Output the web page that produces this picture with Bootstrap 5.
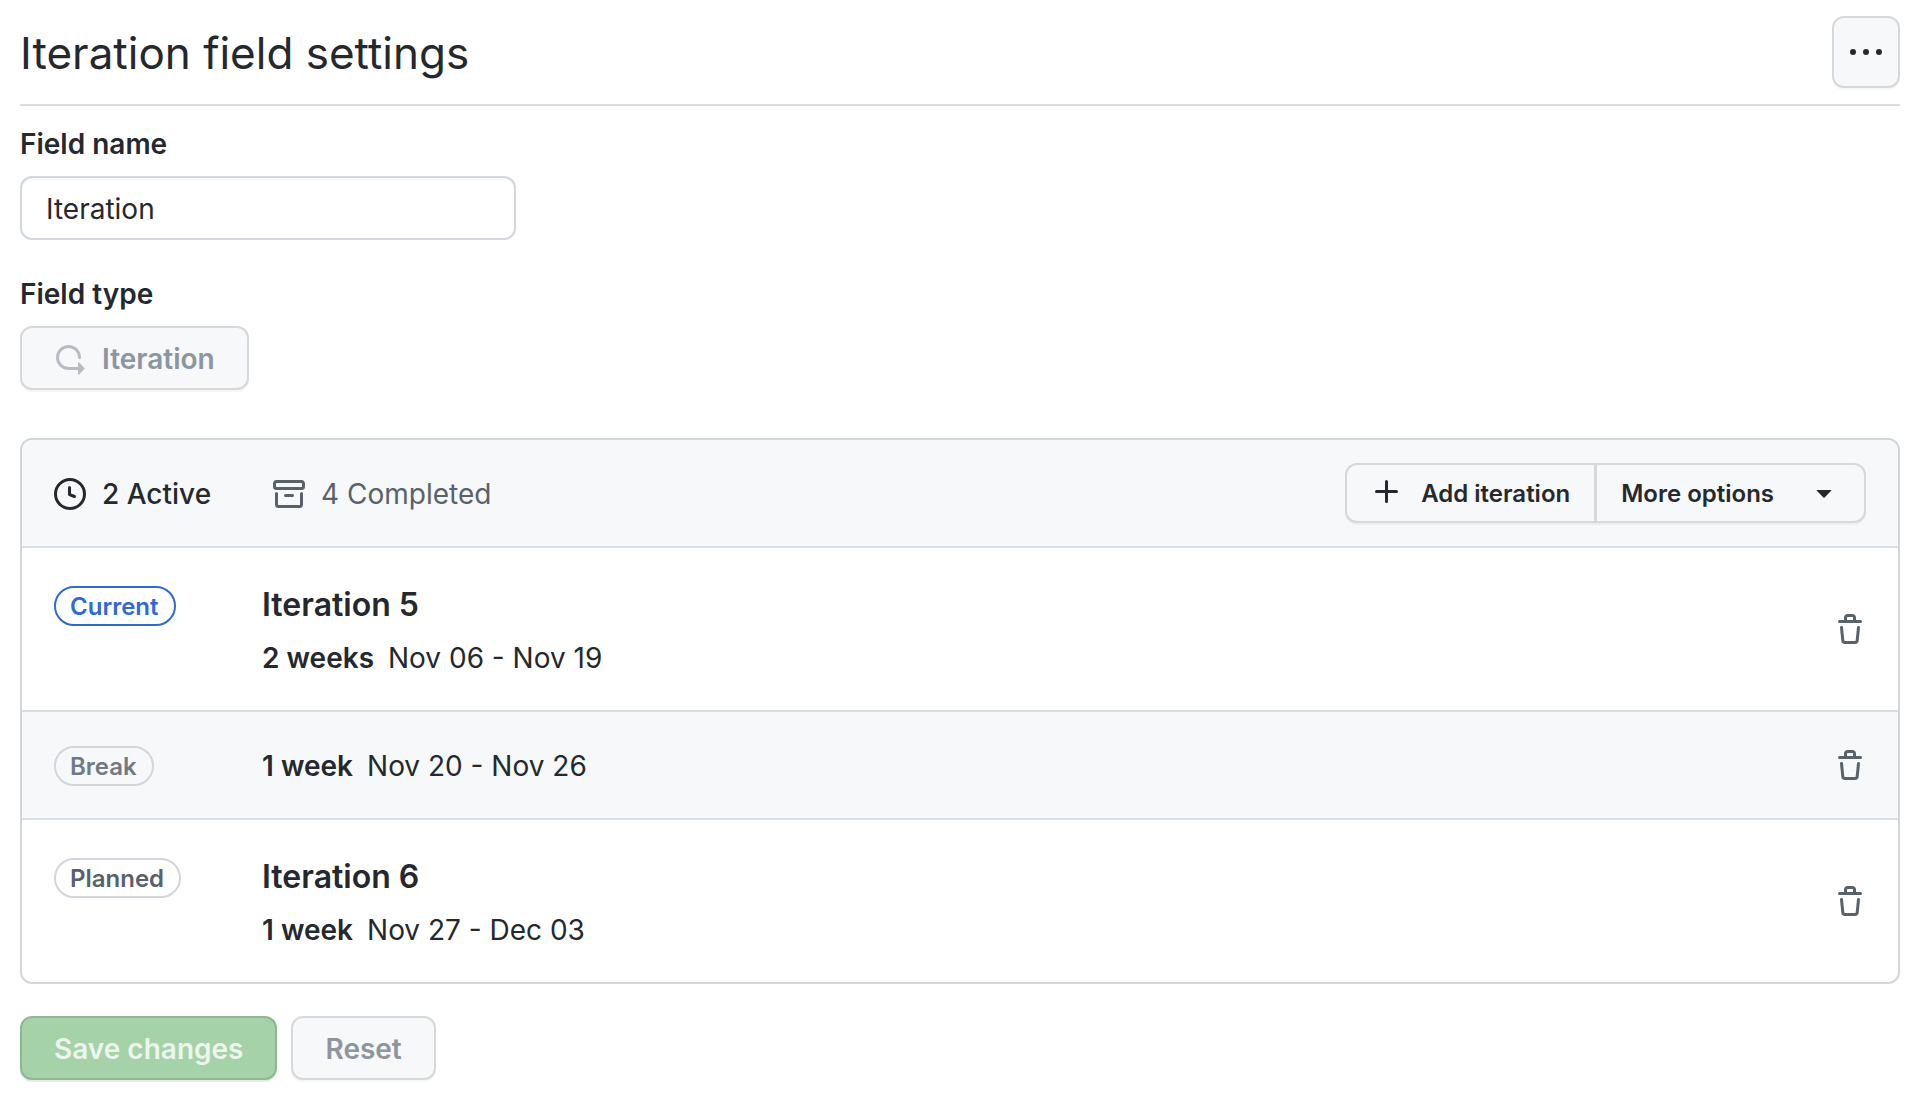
<!DOCTYPE html>
<html lang="en">
<head>
<meta charset="utf-8">
<meta name="viewport" content="width=device-width, initial-scale=1">
<title>Iteration field settings</title>
<link href="https://cdn.jsdelivr.net/npm/bootstrap@5.3.0/dist/css/bootstrap.min.css" rel="stylesheet">
<style>
  :root {
    --ink: #25292e;
    --ink-muted: #59616a;
    --line: #d1d6dc;
    --line-soft: #d8dde1;
    --btn-line: #d6d8da;
    --subtle: #f6f8fa;
  }
  body { font-family: Inter, "Liberation Sans", sans-serif; font-size: 28px; line-height: 40px; color: var(--ink); background: #fff; }
  svg { display: block; flex: none; fill: currentColor; }
  .settings-page { padding: 16px 18px 20px 20px; }
  .page-top { padding-bottom: 16px; border-bottom: 2px solid var(--line-soft); }
  .page-title { font-size: 44px; line-height: 70px; padding-top: 2px; font-weight: 400; }
  .gh-btn {
    --bs-btn-font-size: 28px; --bs-btn-line-height: 40px; --bs-btn-font-weight: 600;
    --bs-btn-border-width: 2px; --bs-btn-border-radius: 12px;
    --bs-btn-padding-x: 32px; --bs-btn-padding-y: 10px;
    --bs-btn-color: var(--ink); --bs-btn-bg: var(--subtle); --bs-btn-border-color: var(--btn-line);
    --bs-btn-hover-color: var(--ink); --bs-btn-hover-bg: #eef1f4; --bs-btn-hover-border-color: var(--btn-line);
    --bs-btn-disabled-color: #8d959f; --bs-btn-disabled-bg: var(--subtle); --bs-btn-disabled-border-color: var(--btn-line);
    --bs-btn-disabled-opacity: 1;
    padding: 11px 32px 9px;
    box-shadow: 0 2px 0 rgba(31, 35, 40, .04);
  }
  .gh-btn-save { --bs-btn-disabled-color: #ecf6ed; --bs-btn-disabled-bg: #a5d2a8; --bs-btn-disabled-border-color: #8fb892; box-shadow: 0 2px 0 rgba(31, 35, 40, .1); }
  .gh-btn-menu { padding: 18px 16px; }
  .gh-btn-sm { --bs-btn-font-size: 24px; --bs-btn-line-height: 36px; padding: 11px 24px 9px; }
  .btn-group > .gh-btn-sm:not(:first-child) { margin-left: -2px; }
  .add-btn { gap: 18px; }
  .more-btn { gap: 34px; }
  .field-label { font-weight: 600; margin: 18px 0 12px; }
  .field-type { margin-top: 34px; }
  .field-input { width: 496px; max-width: 100%; height: 64px; padding: 2px 24px 0; font-size: 28px; color: var(--ink); border: 2px solid var(--line); border-radius: 12px; box-shadow: inset 0 2px 0 rgba(208, 215, 222, .2); }
  .type-icon { color: #b6bcc1; }
  .iteration-panel { margin-top: 48px; border: 2px solid var(--line); border-radius: 12px; overflow: hidden; }
  .panel-top { padding: 23px 32px; background: var(--subtle); }
  .panel-tabs { gap: 62px; padding-top: 2px; }
  .panel-tab { display: flex; align-items: center; gap: 16px; color: var(--ink-muted); text-decoration: none; }
  .panel-tab.active { color: var(--ink); font-weight: 500; }
  .iteration-row { border-top: 2px solid var(--line-soft); padding: 33px 32px 31px; }
  .iteration-row.is-break { background: var(--subtle); }
  .tag-col { width: 208px; flex: none; }
  .tag { display: block; width: fit-content; margin-top: 5px; font-size: 24px; line-height: 34px; font-weight: 600; padding: 2px 15px 0 14px; border: 2px solid var(--line); border-radius: 20px; color: var(--ink-muted); }
  .tag-current { color: #3069d6; border-color: #3069d6; }
  .is-break .tag { margin-top: 1px; color: #727982; }
  .iteration-name { font-size: 32px; line-height: 48px; font-weight: 600; margin: 0 0 8px; }
  .dates { gap: 14px; line-height: 42px; }
  .dates strong { font-weight: 600; }
  .trash-btn { border: 0; background: none; padding: 0; color: var(--ink-muted); }
  .page-actions { margin-top: 32px; gap: 14px; }
</style>
</head>
<body>
<main class="settings-page">
  <header class="page-top d-flex justify-content-between align-items-center">
    <h1 class="page-title mb-0">Iteration field settings</h1>
    <button type="button" class="btn gh-btn gh-btn-menu" aria-label="Field options">
      <svg width="32" height="32" viewBox="0 0 16 16"><path d="M8 9.5a1.5 1.5 0 1 0 0-3 1.5 1.5 0 0 0 0 3ZM1.5 9.5a1.5 1.5 0 1 0 0-3 1.5 1.5 0 0 0 0 3Zm13 0a1.5 1.5 0 1 0 0-3 1.5 1.5 0 0 0 0 3Z"/></svg>
    </button>
  </header>

  <form>
    <label class="field-label d-block" for="field-name">Field name</label>
    <input class="form-control field-input" id="field-name" type="text" value="Iteration">

    <label class="field-label field-type d-block" for="field-type">Field type</label>
    <button type="button" id="field-type" class="btn gh-btn d-inline-flex align-items-center gap-3" disabled>
      <svg class="type-icon" width="32" height="32" viewBox="0 0 16 16"><path d="M2.5 7.25a4.75 4.75 0 0 1 9.5 0 .75.75 0 0 0 1.5 0 6.25 6.25 0 1 0-6.25 6.25H12v2.146c0 .223.27.335.427.177l2.896-2.896a.25.25 0 0 0 0-.354l-2.896-2.896a.25.25 0 0 0-.427.177V12H7.25A4.75 4.75 0 0 1 2.5 7.25Z"/></svg>
      Iteration
    </button>

    <section class="iteration-panel">
      <div class="panel-top d-flex justify-content-between align-items-center">
        <nav class="panel-tabs d-flex">
          <a class="panel-tab active" href="#active">
            <svg width="32" height="32" viewBox="0 0 16 16"><path d="M8 0a8 8 0 1 1 0 16A8 8 0 0 1 8 0ZM1.5 8a6.5 6.5 0 1 0 13 0 6.5 6.5 0 0 0-13 0Zm7-3.25v2.992l2.028.812a.75.75 0 0 1-.557 1.392l-2.5-1A.751.751 0 0 1 7 8.25v-3.5a.75.75 0 0 1 1.5 0Z"/></svg>
            2 Active
          </a>
          <a class="panel-tab" href="#completed">
            <svg width="32" height="32" viewBox="0 0 16 16"><path d="M0 2.75C0 1.784.784 1 1.75 1h12.5c.966 0 1.75.784 1.75 1.75v1.5A1.75 1.75 0 0 1 14.25 6H1.75A1.75 1.75 0 0 1 0 4.25ZM1.75 7a.75.75 0 0 1 .75.75v5.5c0 .138.112.25.25.25h10.5a.25.25 0 0 0 .25-.25v-5.5a.75.75 0 0 1 1.5 0v5.5A1.75 1.75 0 0 1 13.25 15H2.75A1.75 1.75 0 0 1 1 13.25v-5.5A.75.75 0 0 1 1.75 7Zm0-4.5a.25.25 0 0 0-.25.25v1.5c0 .138.112.25.25.25h12.5a.25.25 0 0 0 .25-.25v-1.5a.25.25 0 0 0-.25-.25ZM6.25 8h3.5a.75.75 0 0 1 0 1.5h-3.5a.75.75 0 0 1 0-1.5Z"/></svg>
            4 Completed
          </a>
        </nav>
        <div class="btn-group">
          <button type="button" class="btn gh-btn gh-btn-sm add-btn d-inline-flex align-items-center">
            <svg width="32" height="32" viewBox="0 1 16 16"><path d="M7.75 2a.75.75 0 0 1 .75.75V7h4.25a.75.75 0 0 1 0 1.5H8.5v4.25a.75.75 0 0 1-1.5 0V8.5H2.75a.75.75 0 0 1 0-1.5H7V2.75A.75.75 0 0 1 7.75 2Z"/></svg>
            Add iteration
          </button>
          <button type="button" class="btn gh-btn gh-btn-sm more-btn d-inline-flex align-items-center">
            More options
            <svg width="32" height="32" viewBox="0 1 16 16"><path d="m4.427 7.427 3.396 3.396a.25.25 0 0 0 .354 0l3.396-3.396A.25.25 0 0 0 11.396 7H4.604a.25.25 0 0 0-.177.427Z"/></svg>
          </button>
        </div>
      </div>

      <div class="iteration-row d-flex">
        <div class="tag-col"><span class="tag tag-current">Current</span></div>
        <div class="flex-grow-1">
          <h2 class="iteration-name">Iteration 5</h2>
          <div class="dates d-flex"><strong>2 weeks</strong><span>Nov 06 - Nov 19</span></div>
        </div>
        <button type="button" class="trash-btn align-self-center" aria-label="Delete Iteration 5">
          <svg width="32" height="32" viewBox="0 0 16 16"><path d="M11 1.75V3h2.25a.75.75 0 0 1 0 1.5H2.75a.75.75 0 0 1 0-1.5H5V1.75C5 .784 5.784 0 6.75 0h2.5C10.216 0 11 .784 11 1.75ZM4.496 6.675l.66 6.6a.25.25 0 0 0 .249.225h5.19a.25.25 0 0 0 .249-.225l.66-6.6a.75.75 0 0 1 1.492.149l-.66 6.6A1.748 1.748 0 0 1 10.595 15h-5.19a1.75 1.75 0 0 1-1.741-1.575l-.66-6.6a.75.75 0 1 1 1.492-.15ZM6.5 1.75V3h3V1.75a.25.25 0 0 0-.25-.25h-2.5a.25.25 0 0 0-.25.25Z"/></svg>
        </button>
      </div>

      <div class="iteration-row is-break d-flex">
        <div class="tag-col"><span class="tag">Break</span></div>
        <div class="flex-grow-1">
          <div class="dates d-flex"><strong>1 week</strong><span>Nov 20 - Nov 26</span></div>
        </div>
        <button type="button" class="trash-btn align-self-center" aria-label="Delete break">
          <svg width="32" height="32" viewBox="0 0 16 16"><path d="M11 1.75V3h2.25a.75.75 0 0 1 0 1.5H2.75a.75.75 0 0 1 0-1.5H5V1.75C5 .784 5.784 0 6.75 0h2.5C10.216 0 11 .784 11 1.75ZM4.496 6.675l.66 6.6a.25.25 0 0 0 .249.225h5.19a.25.25 0 0 0 .249-.225l.66-6.6a.75.75 0 0 1 1.492.149l-.66 6.6A1.748 1.748 0 0 1 10.595 15h-5.19a1.75 1.75 0 0 1-1.741-1.575l-.66-6.6a.75.75 0 1 1 1.492-.15ZM6.5 1.75V3h3V1.75a.25.25 0 0 0-.25-.25h-2.5a.25.25 0 0 0-.25.25Z"/></svg>
        </button>
      </div>

      <div class="iteration-row d-flex">
        <div class="tag-col"><span class="tag">Planned</span></div>
        <div class="flex-grow-1">
          <h2 class="iteration-name">Iteration 6</h2>
          <div class="dates d-flex"><strong>1 week</strong><span>Nov 27 - Dec 03</span></div>
        </div>
        <button type="button" class="trash-btn align-self-center" aria-label="Delete Iteration 6">
          <svg width="32" height="32" viewBox="0 0 16 16"><path d="M11 1.75V3h2.25a.75.75 0 0 1 0 1.5H2.75a.75.75 0 0 1 0-1.5H5V1.75C5 .784 5.784 0 6.75 0h2.5C10.216 0 11 .784 11 1.75ZM4.496 6.675l.66 6.6a.25.25 0 0 0 .249.225h5.19a.25.25 0 0 0 .249-.225l.66-6.6a.75.75 0 0 1 1.492.149l-.66 6.6A1.748 1.748 0 0 1 10.595 15h-5.19a1.75 1.75 0 0 1-1.741-1.575l-.66-6.6a.75.75 0 1 1 1.492-.15ZM6.5 1.75V3h3V1.75a.25.25 0 0 0-.25-.25h-2.5a.25.25 0 0 0-.25.25Z"/></svg>
        </button>
      </div>
    </section>

    <div class="page-actions d-flex">
      <button type="submit" class="btn gh-btn gh-btn-save" disabled>Save changes</button>
      <button type="reset" class="btn gh-btn" disabled>Reset</button>
    </div>
  </form>
</main>
<script src="https://cdn.jsdelivr.net/npm/bootstrap@5.3.0/dist/js/bootstrap.bundle.min.js"></script>
</body>
</html>
